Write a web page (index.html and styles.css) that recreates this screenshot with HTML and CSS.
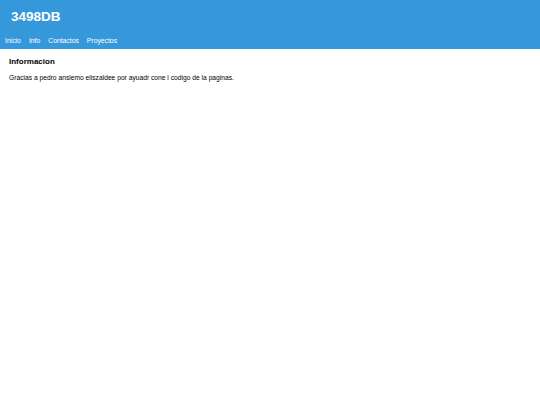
FILE: index.html
```html
<!DOCTYPE html>
<html>
<head>
<meta charset="utf-8">
<link rel="stylesheet" href="styles.css">
</head>
<body>
<header class="header">
  <h1 class="title">3498DB</h1>
  <nav class="nav">
    <a class="nav-link" href="#">Inicio</a>
    <a class="nav-link" href="#">Info</a>
    <a class="nav-link" href="#">Contactos</a>
    <a class="nav-link" href="#">Proyectos</a>
  </nav>
</header>
<main class="content">
  <h2 class="heading">Informacion</h2>
  <p class="text">Gracias a pedro anslemo eliszaldee por ayuadr cone l codigo de la paginas.</p>
</main>
</body>
</html>
```
FILE: styles.css
```css
html, body {
  margin: 0;
  padding: 0;
  background: #ffffff;
  font-family: "Liberation Sans", Arial, sans-serif;
}
.header {
  background: #3498db;
  color: #ffffff;
  height: 49px;
  display: flex;
  flex-direction: column;
}
.title {
  margin: 0;
  padding: 9px 0 0 11px;
  font-size: 13.5px;
  line-height: 16px;
  font-weight: bold;
}
.nav {
  display: flex;
  gap: 8px;
  padding: 11px 0 0 5px;
}
.nav-link {
  color: #ffffff;
  text-decoration: none;
  font-size: 6.8px;
  line-height: 9px;
}
.content {
  padding: 8px 9px;
}
.heading {
  margin: 0;
  font-size: 8px;
  line-height: 10px;
  font-weight: bold;
  color: #000;
}
.text {
  margin: 7px 0 0;
  font-size: 6.7px;
  line-height: 8px;
  color: #000;
}
```
